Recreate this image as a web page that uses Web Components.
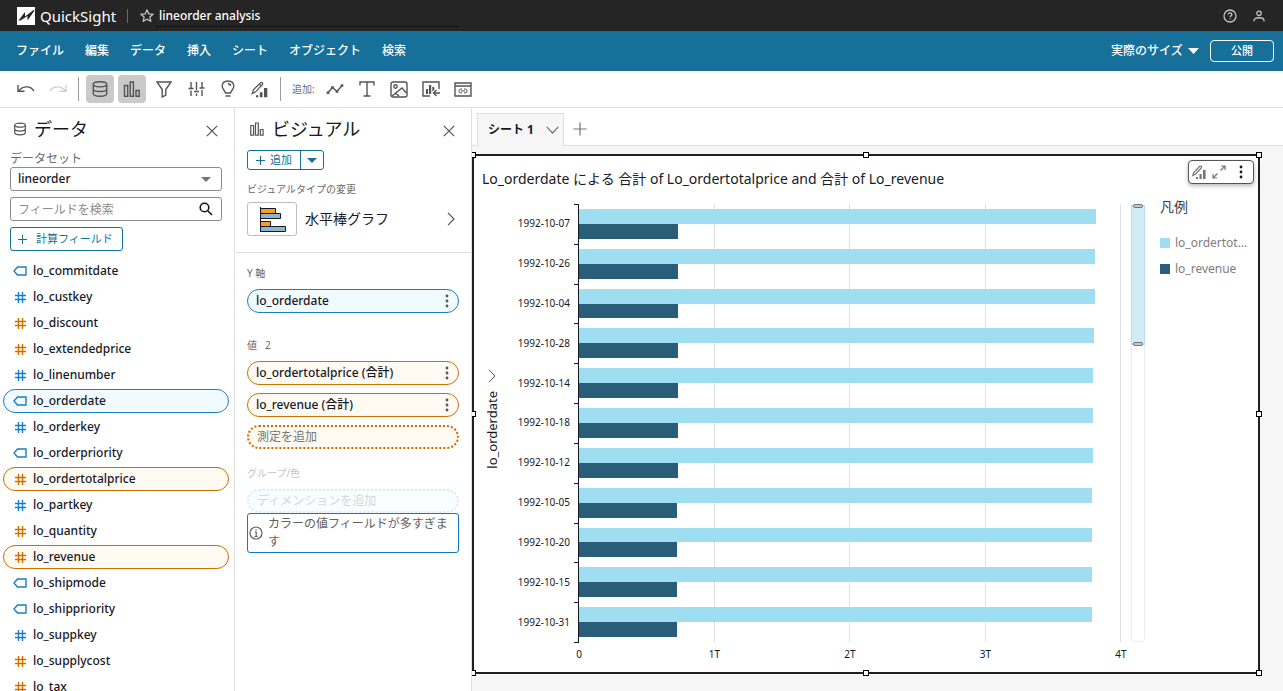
<!DOCTYPE html>
<html lang="ja">
<head>
<meta charset="utf-8">
<meta name="viewport" content="width=device-width, initial-scale=1">
<title>lineorder analysis - QuickSight</title>
<style>
  html, body { height: 100%; }
  body {
    margin: 0; display: flex; flex-direction: column; overflow: hidden;
    background: #fff; color: #16191f;
    font-family: "Noto Sans", "Noto Sans CJK JP", sans-serif;
    font-size: 12px; line-height: 16px;
    --blue: #16709a; --dim: #1a7fc1; --mea: #cc7000; --gray: #6b6b6b; --line: #e0e0e0;
  }
  main { flex: 1; display: flex; min-height: 0; }
</style>
</head>
<body>
<qs-header name="lineorder analysis"></qs-header>
<qs-menubar>
  <a href="#file">ファイル</a><a href="#edit">編集</a><a href="#data">データ</a><a href="#insert">挿入</a><a href="#sheet">シート</a><a href="#object">オブジェクト</a><a href="#search">検索</a>
</qs-menubar>
<qs-toolbar></qs-toolbar>
<main>
  <qs-data-panel>
    <qs-field kind="dim">lo_commitdate</qs-field>
    <qs-field kind="num">lo_custkey</qs-field>
    <qs-field kind="mea">lo_discount</qs-field>
    <qs-field kind="mea">lo_extendedprice</qs-field>
    <qs-field kind="num">lo_linenumber</qs-field>
    <qs-field kind="dim" selected>lo_orderdate</qs-field>
    <qs-field kind="num">lo_orderkey</qs-field>
    <qs-field kind="dim">lo_orderpriority</qs-field>
    <qs-field kind="mea" selected>lo_ordertotalprice</qs-field>
    <qs-field kind="num">lo_partkey</qs-field>
    <qs-field kind="mea">lo_quantity</qs-field>
    <qs-field kind="mea" selected>lo_revenue</qs-field>
    <qs-field kind="dim">lo_shipmode</qs-field>
    <qs-field kind="dim">lo_shippriority</qs-field>
    <qs-field kind="num">lo_suppkey</qs-field>
    <qs-field kind="mea">lo_supplycost</qs-field>
    <qs-field kind="mea">lo_tax</qs-field>
  </qs-data-panel>
  <qs-visual-panel>
    <qs-well label="Y 軸">
      <qs-pill kind="dim">lo_orderdate</qs-pill>
    </qs-well>
    <qs-well label="値" count="2">
      <qs-pill kind="mea">lo_ordertotalprice (合計)</qs-pill>
      <qs-pill kind="mea">lo_revenue (合計)</qs-pill>
      <qs-pill kind="mea" empty>測定を追加</qs-pill>
    </qs-well>
    <qs-well label="グループ/色" disabled>
      <qs-pill kind="dim" empty>ディメンションを追加</qs-pill>
      <qs-notice slot="note">カラーの値フィールドが多すぎます</qs-notice>
    </qs-well>
  </qs-visual-panel>
  <qs-sheet>
    <span slot="tab">シート 1</span>
    <qs-visual>
      <span slot="title">Lo_orderdate による 合計 of Lo_ordertotalprice and 合計 of Lo_revenue</span>
      <qs-bar-chart axis="lo_orderdate" max="4000">
        <qs-bar date="1992-10-07" total="3818" revenue="730"></qs-bar>
        <qs-bar date="1992-10-26" total="3811" revenue="730"></qs-bar>
        <qs-bar date="1992-10-04" total="3808" revenue="730"></qs-bar>
        <qs-bar date="1992-10-28" total="3804" revenue="729"></qs-bar>
        <qs-bar date="1992-10-14" total="3797" revenue="728"></qs-bar>
        <qs-bar date="1992-10-18" total="3796" revenue="727"></qs-bar>
        <qs-bar date="1992-10-12" total="3793" revenue="727"></qs-bar>
        <qs-bar date="1992-10-05" total="3789" revenue="726"></qs-bar>
        <qs-bar date="1992-10-20" total="3786" revenue="725"></qs-bar>
        <qs-bar date="1992-10-15" total="3784" revenue="724"></qs-bar>
        <qs-bar date="1992-10-31" total="3783" revenue="724"></qs-bar>
      </qs-bar-chart>
      <qs-legend slot="legend"></qs-legend>
    </qs-visual>
  </qs-sheet>
</main>

<script>
const BASE = `
  :host, *, *::before, *::after { box-sizing: border-box; }
  button, input, select { font: inherit; color: inherit; margin: 0; padding: 0; border: 0; background: none; appearance: none; outline: 0; }
  button { display: inline-flex; align-items: center; justify-content: center; }
  a { color: inherit; text-decoration: none; }
  h2, p { margin: 0; font-weight: 400; }
`;

function define(name, css, html) {
  customElements.define(name, class extends HTMLElement {
    constructor() {
      super();
      this.attachShadow({ mode: "open" });
    }
    connectedCallback() {
      const markup = typeof html === "function" ? html(this) : html;
      this.shadowRoot.innerHTML = `<style>${BASE}${css}</style>${markup}`;
    }
  });
}

/* name: [width, height, drawing] */
const ICONS = {
  logo: [18, 18, `<path fill="#fff" stroke="none" d="M0 0h18v18H0z"/><path fill="#252525" stroke="none" d="M1.500 13.500 8 5v4.500L17.200 2.500V4L10.500 13.500V9L3.500 13.500z"/>`],
  star: [14, 13, `<path d="M7 1l1.800 3.800 4.200.5-3.100 2.800.8 4.100L7 10.200l-3.700 2 .8-4.100L1 5.300l4.200-.5z"/>`],
  help: [14, 14, `<circle cx="7" cy="7" r="6"/><path d="M5.200 5.600c0-2.300 3.700-2.300 3.700 0 0 1.300-1.800 1.300-1.800 2.600M7.100 9.400v1.200"/>`],
  user: [12, 12, `<circle cx="6" cy="3.300" r="2.200"/><path d="M1 11.500V10.500C1 6.800 11 6.800 11 10.500V11.500"/>`],
  undo: [18, 12, `<path d="M1 2v6.300h6.500M1.500 8C6 2.500 13.500 2.500 17 8"/>`],
  redo: [18, 12, `<path d="M17 2v6.300h-6.500M16.500 8C12 2.500 4.500 2.500 1 8"/>`],
  db: [16, 18, `<ellipse cx="8" cy="4.300" rx="6.700" ry="2.600"/><path d="M1.300 4.300v9.200c0 3.600 13.400 3.600 13.400 0V4.300M1.300 9c0 3.400 13.400 3.400 13.400 0"/>`],
  dbSmall: [12, 14, `<ellipse cx="6" cy="3.200" rx="5.300" ry="2"/><path d="M.7 3.200v7.600c0 2.700 10.600 2.700 10.600 0V3.200M.7 7c0 2.700 10.600 2.700 10.600 0"/>`],
  bars: [18, 16, `<path d="M1.500 4.500h3.200v10.800H1.500zM7.200 1h3.200v14.300H7.200zM13 9.500h3.200v5.800H13z"/>`],
  barsSmall: [14, 14, `<path d="M.8 3.500h2.800v9.700H.8zM5.500 1h2.800v12.200H5.500zM10.300 7.500h2.800v5.700h-2.800z"/>`],
  filter: [16, 17, `<path d="M1 1h14L9.800 8.500V14L6.200 16V8.500z"/>`],
  params: [17, 16, `<path d="M3 1v4M3 9.500V15M8.500 1v8M8.500 12.500V15M14 1v3.500M14 9v6M.5 7.500h5M6 10.500h5M11.500 7h5M3 5v2.500M14 4.500V7"/>`],
  bulb: [14, 18, `<path d="M4.500 13c0-2-3.300-3.500-3.300-6.700C1.200 2.800 3.800 1 7 1s5.800 1.800 5.800 5.300c0 3.200-3.300 4.700-3.300 6.700zM4.500 16h5M7 3.700c1.800 0 2.600 1 2.600 2.400"/>`],
  insight: [18, 17, `<path fill="currentColor" stroke="none" d="M5 14.300h2.300v2H5zM8.800 11.300h2.700v5H8.800zM13 7h3.300v9.300H13z"/><path stroke-width="1.200" d="M1.200 12.500l1.200-3.700 7-7c1.200-1.200 3.200.3 2 1.700L4.600 10.800zM8.300 3l2 2"/>`],
  insightSmall: [15, 14, `<path fill="currentColor" stroke="none" d="M4 12h2v2H4zM7.500 9h2.200v5H7.500zM11 5h2.600v9H11z"/><path d="M.8 10.500l1-3L7.500 1.500c1-1.100 2.700.2 1.800 1.400L3.700 9z"/>`],
  line: [18, 12, `<path d="M2 9.500 6.500 4.500l4.500 4L16 2.500"/><path fill="currentColor" stroke="none" d="M.7 8.500h2.600v2.600H.7zM5.200 3.200h2.600v2.600H5.200zM9.700 7.200h2.600v2.600H9.700zM14.700 1.200h2.600v2.600h-2.600z"/>`],
  text: [16, 16, `<path d="M1 4.500V1h14v3.500M8 1v14M4.500 15h7"/>`],
  image: [18, 17, `<rect x="1" y="1" width="16" height="15" rx="2"/><circle cx="5.500" cy="5.500" r="1.700"/><path d="M2 15 12 7l4.500 5M5.500 12.200 9 15"/>`],
  chartIn: [18, 16, `<path d="M17 8V1H1v14h7M11.500 12H18M14.500 9l-3 3 3 3"/><path fill="currentColor" stroke="none" d="M4 8h2v5H4zM7 4h2.200v9H7zM10.300 6h2v3l-2 1.500z"/>`],
  embed: [18, 15, `<path d="M1 1h16v13H1zM1 4h16"/><path stroke-width="1" d="M8 7H6.800a1.900 1.900 0 0 0 0 3.800H8M10 7h1.200a1.900 1.900 0 0 1 0 3.800H10M7 8.900h4"/>`],
  close: [12, 12, `<path d="M.8.800 11.200 11.200M11.200.800.800 11.200"/>`],
  search: [14, 14, `<circle cx="5.500" cy="5.500" r="4.300"/><path d="M8.700 8.700 13 13"/>`],
  plus: [14, 14, `<path d="M7 .5v13M.5 7h13"/>`],
  plusSmall: [9, 9, `<path d="M4.500 0v9M0 4.500h9"/>`],
  caret: [10, 5, `<path fill="currentColor" stroke="none" d="M0 0h10L5 5z"/>`],
  caretBig: [11, 6, `<path fill="currentColor" stroke="none" d="M0 0h11L5.500 6z"/>`],
  down: [13, 8, `<path d="M.7.800 6.500 7 12.300.800"/>`],
  right: [8, 14, `<path d="M1 .8 7 7 1 13.200"/>`],
  dim: [14, 10, `<path d="M4.500 1H13v8H4.500L1 5z"/>`],
  hash: [11, 11, `<path d="M3.500 0v11M7.500 0v11M0 3.500h11M0 7.500h11"/>`],
  dots: [4, 14, `<g fill="currentColor" stroke="none"><circle cx="2" cy="2" r="1.400"/><circle cx="2" cy="7" r="1.400"/><circle cx="2" cy="12" r="1.400"/></g>`],
  expand: [14, 14, `<path d="M8.500 5.500 13 1M9 1h4v4M5.500 8.500 1 13M1 9v4h4"/>`],
  info: [14, 14, `<circle cx="7" cy="7" r="6"/><path d="M5.800 6h1.400v4.500M5.500 10.500h3.200M7 3.300v1.300"/>`],
  hbar: [30, 28, `<g stroke="#16191f"><path fill="#ff9d1f" d="M3.500 3.500h15v5h-15z"/><path fill="#8db6cc" d="M3.500 8.500h20v5h-20z"/><path fill="#ff9d1f" d="M3.500 16.500h10v5h-10z"/><path fill="#8db6cc" d="M3.500 21.500h25v5h-25z"/><path d="M3.500 2v25"/></g>`]
};

define("qs-icon", `
  :host { display: inline-flex; flex: none; }
  svg { display: block; fill: none; stroke: currentColor; stroke-width: var(--stroke, 1.4); }
`, el => {
  const [w, h, body] = ICONS[el.getAttribute("name")];
  return `<svg width="${w}" height="${h}" viewBox="0 0 ${w} ${h}" aria-hidden="true">${body}</svg>`;
});

define("qs-header", `
  :host { display: flex; align-items: center; height: 31px; flex: none; padding: 0 18px 0 17px; background: #252525; color: #fff; }
  .brand { font-size: 15px; line-height: 20px; margin-left: 5px; }
  .sep { width: 1px; height: 14px; margin: 0 12px 0 11px; background: #6b6b6b; }
  qs-icon { color: #c4c4c4; --stroke: 1.3; }
  input { width: 303px; height: 22px; margin-left: 2px; padding: 0 3px; font-weight: 500; border-bottom: 1px dotted #000; }
  .right { margin-left: auto; display: flex; align-items: center; gap: 16px; }
`, el => `
  <qs-icon name="logo"></qs-icon><span class="brand">QuickSight</span><span class="sep"></span>
  <qs-icon name="star"></qs-icon>
  <input aria-label="分析名" value="${el.getAttribute("name")}">
  <div class="right"><button aria-label="ヘルプ"><qs-icon name="help"></qs-icon></button><button aria-label="ユーザー"><qs-icon name="user"></qs-icon></button></div>
`);

define("qs-menubar", `
  :host { display: flex; align-items: center; height: 40px; flex: none; padding: 0 9px 0 16px; background: var(--blue); color: #fff; font-weight: 500; }
  nav { display: flex; gap: 21px; flex: 1; }
  ::slotted(a) { color: inherit; text-decoration: none; white-space: nowrap; }
  label { display: flex; align-items: center; gap: 4px; margin-right: 11px; }
  select { width: 73px; font-weight: 500; }
  .publish { width: 64px; height: 22px; border: 1px solid #fff; border-radius: 4px; font-weight: 500; font-size: 11px; }
`, `
  <nav><slot></slot></nav>
  <label><select aria-label="表示サイズ"><option>実際のサイズ</option></select><qs-icon name="caretBig"></qs-icon></label>
  <button class="publish">公開</button>
`);

define("qs-toolbar", `
  :host { display: flex; align-items: center; height: 37px; flex: none; padding: 0 12px; gap: 4px; border-bottom: 1px solid var(--line); color: #545454; }
  button { width: 28px; height: 28px; border-radius: 4px; }
  button[aria-pressed] { background: #cacaca; }
  button:disabled { color: #cfcfcf; }
  .sep { width: 1px; height: 24px; margin: 0 3px 0 2px; background: #9a9a9a; }
  .add { width: 29px; padding-left: 4px; font-size: 10px; white-space: nowrap; color: var(--gray); }
`, `
  <button aria-label="元に戻す"><qs-icon name="undo"></qs-icon></button>
  <button aria-label="やり直す" disabled><qs-icon name="redo"></qs-icon></button>
  <span class="sep"></span>
  <button aria-label="データ" aria-pressed="true"><qs-icon name="db"></qs-icon></button>
  <button aria-label="ビジュアル" aria-pressed="true"><qs-icon name="bars"></qs-icon></button>
  <button aria-label="フィルター"><qs-icon name="filter"></qs-icon></button>
  <button aria-label="パラメータ"><qs-icon name="params"></qs-icon></button>
  <button aria-label="インサイト"><qs-icon name="bulb"></qs-icon></button>
  <button aria-label="プロパティ"><qs-icon name="insight"></qs-icon></button>
  <span class="sep"></span>
  <span class="add">追加:</span>
  <button aria-label="ビジュアルを追加"><qs-icon name="line"></qs-icon></button>
  <button aria-label="テキストを追加"><qs-icon name="text"></qs-icon></button>
  <button aria-label="画像を追加"><qs-icon name="image"></qs-icon></button>
  <button aria-label="既存のビジュアルを追加"><qs-icon name="chartIn"></qs-icon></button>
  <button aria-label="埋め込みを追加"><qs-icon name="embed"></qs-icon></button>
`);

define("qs-panel-title", `
  :host { display: flex; align-items: center; height: 42px; color: #545454; --stroke: 1.2; }
  h2 { flex: 1; margin-left: 8px; font-size: 18px; line-height: 24px; color: #16191f; }
  button { margin-top: 4px; }
`, el => `<qs-icon name="${el.getAttribute("icon")}"></qs-icon><h2><slot></slot></h2><button aria-label="閉じる"><qs-icon name="close"></qs-icon></button>`);

define("qs-data-panel", `
  :host { display: flex; flex-direction: column; width: 235px; flex: none; border-right: 1px solid var(--line); overflow: hidden; }
  .controls { display: flex; flex-direction: column; align-items: flex-start; padding: 0 12px 7px 10px; gap: 6px; }
  qs-panel-title { padding: 0 4px; align-self: stretch; margin-bottom: -6px; }
  .caption { line-height: 17px; color: var(--gray); margin-bottom: -6px; }
  .box { display: flex; align-items: center; align-self: stretch; height: 24px; padding: 0 10px 0 7px; border: 1px solid #8c8c8c; border-radius: 3px; }
  .box select, .box input { flex: 1; min-width: 0; height: 22px; }
  .box select { font-weight: 500; }
  .box input::placeholder { color: #8c8c8c; opacity: 1; }
  .box qs-icon[name=caret] { color: #757575; }
  .box qs-icon[name=search] { color: #16191f; margin-right: -2px; --stroke: 1.6; }
  .calc { height: 24px; padding: 0 9px 0 7px; gap: 9px; border: 1px solid var(--blue); border-radius: 3px; color: var(--blue); font-size: 11px; --stroke: 1; }
`, `
  <div class="controls">
    <qs-panel-title icon="dbSmall">データ</qs-panel-title>
    <label class="caption" for="dataset">データセット</label>
    <div class="box"><select id="dataset"><option>lineorder</option></select><qs-icon name="caret"></qs-icon></div>
    <div class="box"><input type="search" aria-label="フィールドを検索" placeholder="フィールドを検索"><qs-icon name="search"></qs-icon></div>
    <button class="calc"><qs-icon name="plusSmall"></qs-icon>計算フィールド</button>
  </div>
  <slot></slot>
`);

define("qs-field", `
  :host { display: flex; align-items: center; height: 24px; flex: none; margin: 1px 5px 1px 3px; border: 1px solid transparent; border-radius: 12px; font-weight: 500; }
  :host([selected][kind=dim]) { border-color: var(--dim); background: #f1faff; }
  :host([selected][kind=mea]) { border-color: var(--mea); background: #fffbf3; }
  .mark { display: flex; justify-content: center; width: 14px; margin: 0 6px 0 9px; color: var(--dim); }
  :host([kind=mea]) .mark { color: var(--mea); }
`, el => `<span class="mark"><qs-icon name="${el.getAttribute("kind") === "dim" ? "dim" : "hash"}"></qs-icon></span><slot></slot>`);

define("qs-visual-panel", `
  :host { display: block; width: 237px; flex: none; border-right: 1px solid var(--line); overflow: hidden; }
  .head { padding: 0 12px 16px; border-bottom: 1px solid var(--line); }
  qs-panel-title { padding: 0 4px 0 3px; }
  .split { display: flex; width: 77px; height: 20px; border: 1px solid var(--blue); border-radius: 3px; color: var(--blue); font-size: 11px; --stroke: 1.2; }
  .split .new { flex: 1; gap: 5px; }
  .split .more { width: 23px; border-left: 1px solid var(--blue); }
  .caption { font-size: 10px; line-height: 16px; margin: 11px 0 5px; color: var(--gray); }
  .type { display: flex; width: 100%; justify-content: flex-start; font-size: 14px; line-height: 20px; padding-right: 4px; }
  .thumb { display: flex; align-items: center; justify-content: center; width: 50px; height: 34px; margin-right: 8px; border: 1px solid #bdbdbd; border-radius: 3px; --stroke: 1; }
  .type > qs-icon { margin-left: auto; color: #545454; --stroke: 1.2; }
  .wells { padding: 12px; }
`, `
  <div class="head">
    <qs-panel-title icon="barsSmall">ビジュアル</qs-panel-title>
    <div class="split"><button class="new"><qs-icon name="plusSmall"></qs-icon>追加</button><button class="more" aria-label="その他の追加"><qs-icon name="caret"></qs-icon></button></div>
    <p class="caption">ビジュアルタイプの変更</p>
    <button class="type"><span class="thumb"><qs-icon name="hbar"></qs-icon></span>水平棒グラフ<qs-icon name="right"></qs-icon></button>
  </div>
  <div class="wells"><slot></slot></div>
`);

define("qs-well", `
  :host { display: block; margin-bottom: 24px; }
  p { font-size: 10px; line-height: 16px; margin-bottom: 8px; color: var(--gray); }
  .count { margin-left: 8px; }
  .pills { display: flex; flex-direction: column; gap: 8px; }
  :host([disabled]) p { opacity: .4; }
  :host([disabled]) .pills { opacity: .3; --dim: #7cc3e8; }
  :host([disabled]) { margin-top: -8px; }
`, el => `
  <p>${el.getAttribute("label")}${el.hasAttribute("count") ? `<span class="count">${el.getAttribute("count")}</span>` : ""}</p>
  <div class="pills"><slot></slot></div><slot name="note"></slot>
`);

define("qs-pill", `
  :host { display: flex; align-items: center; height: 24px; padding: 0 9px 0 8px; border: 1px solid var(--dim); border-radius: 12px; background: #f1faff; font-weight: 500; }
  :host([kind=mea]) { border-color: var(--mea); background: #fffbf3; }
  :host([empty]) { border-width: 2px; border-style: dotted; font-weight: 400; color: #757575; }
  button { margin-left: auto; color: #545454; }
`, el => `<slot></slot>${el.hasAttribute("empty") ? "" : `<button aria-label="フィールドメニュー"><qs-icon name="dots"></qs-icon></button>`}`);

define("qs-notice", `
  :host { display: flex; align-items: center; gap: 5px; padding: 1px 9px 1px 1px; border: 1px solid #1177c9; border-radius: 3px; line-height: 18px; color: #606060; --stroke: 1.2; }
`, `<qs-icon name="info"></qs-icon><span><slot></slot></span>`);

define("qs-sheet", `
  :host { display: flex; flex-direction: column; flex: 1; min-width: 0; background: #f6f6f6; }
  .tabs { display: flex; align-items: flex-end; height: 38px; flex: none; padding-left: 5px; background: #fff; border-bottom: 1px solid var(--line); --stroke: 1.2; color: #757575; }
  .tab { height: 33px; margin-bottom: -1px; padding: 0 4px 0 10px; gap: 12px; background: #f6f6f6; border: 1px solid var(--line); border-bottom: 0; font-weight: 700; }
  .tab ::slotted(span) { color: #16191f; white-space: nowrap; }
  .new { height: 32px; margin-left: 9px; }
  .canvas { flex: 1; display: flex; min-height: 0; padding: 8px 23px 17px 0; overflow: hidden; }
`, `
  <div class="tabs"><button class="tab"><slot name="tab"></slot><qs-icon name="down"></qs-icon></button><button class="new" aria-label="シートを追加"><qs-icon name="plus"></qs-icon></button></div>
  <div class="canvas"><slot></slot></div>
`);

define("qs-visual", `
  :host { position: relative; display: grid; grid-template: auto 1fr / 1fr auto; flex: 1; min-width: 0; border: 2px solid #202020; background: #fff; padding: 13px 8px 6px 8px; }
  .title { grid-column: 1 / -1; font-size: 14px; line-height: 20px; margin-bottom: 15px; }
  .actions { position: absolute; top: 4px; right: 4px; display: flex; align-items: center; gap: 5px; width: 66px; height: 24px; padding: 0 4px 0 3px; border: 1px solid #545454; border-radius: 4px; background: #fff; box-shadow: 0 2px 4px #0004; color: #757575; --stroke: 1.2; }
  .actions button:last-child { margin-left: auto; margin-right: 6px; color: #16191f; }
  .handle { position: absolute; width: 6px; height: 6px; background: #fff; border: 1px solid #000; transform: translate(-50%, -50%); }
  .n { top: -1px; } .s { top: calc(100% + 1px); } .m { top: 50%; }
  .w { left: -1px; } .e { left: calc(100% + 1px); } .c { left: 50%; }
`, `
  <div class="title"><slot name="title"></slot></div>
  <slot></slot><slot name="legend"></slot>
  <div class="actions">
    <button aria-label="プロパティ"><qs-icon name="insightSmall"></qs-icon></button>
    <button aria-label="最大化"><qs-icon name="expand"></qs-icon></button>
    <button aria-label="メニュー"><qs-icon name="dots"></qs-icon></button>
  </div>
  ${["n w", "n c", "n e", "m w", "m e", "s w", "s c", "s e"].map(c => `<i class="handle ${c}"></i>`).join("")}
`);

define("qs-bar-chart", `
  :host { display: grid; grid-template: 1fr 24px / 1fr 14px; column-gap: 10px; min-width: 0; min-height: 0; }
  .plot { position: relative; display: flex; flex-direction: column; }
  .grid { position: absolute; inset: 0 0 0 96px; display: grid; grid-template-columns: repeat(4, 1fr); border-left: 1px solid #16191f; }
  .grid i { border-right: 1px solid #e0e0e0; }
  .axis { position: absolute; left: 2px; top: 0; bottom: 0; display: flex; flex-direction: column; align-items: center; justify-content: center; gap: 8px; width: 16px; padding-bottom: 8px; font-size: 13px; --stroke: 1; }
  .axis span { writing-mode: vertical-rl; transform: rotate(180deg); }
  .axis button { color: #545454; }
  .scale { grid-row: 2; display: flex; justify-content: space-between; margin-left: 97px; font-size: 10px; }
  .scale span { width: 0; display: flex; justify-content: center; line-height: 24px; }
  .zoom { border: 1px solid #ededed; border-radius: 3px; }
  .range { height: 32%; background: #d3ebf5; border: 1px solid #b9dceb; margin: 0 -1px; display: flex; flex-direction: column; justify-content: space-between; align-items: center; }
  .range i { width: 10px; height: 4px; margin: -2px 0; border: 1px solid #6b7780; border-radius: 2px; background: #c4ccd0; }
`, el => `
  <div class="plot">
    <div class="grid"><i></i><i></i><i></i><i></i></div>
    <slot></slot>
    <div class="axis"><button aria-label="軸メニュー"><qs-icon name="right"></qs-icon></button><span>${el.getAttribute("axis")}</span></div>
  </div>
  <div class="zoom"><div class="range"><i></i><i></i></div></div>
  <div class="scale"><span>0</span><span>1T</span><span>2T</span><span>3T</span><span>4T</span></div>
`);

define("qs-bar", `
  :host { position: relative; display: flex; flex: 1; min-height: 0; align-items: stretch; }
  .date { width: 88px; flex: none; display: flex; align-items: center; justify-content: flex-end; padding-bottom: 1px; font-size: 10px; line-height: 16px; }
  .tick { width: 5px; margin: 0 0 -1px 4px; border: solid #16191f; border-width: 1px 0; flex: none; }
  .bars { flex: 1; display: flex; flex-direction: column; padding: 5px 0; }
  .bars i { flex: 1; }
  .total { background: #9fddf0; }
  .revenue { background: #2a5d78; }
`, el => {
  const max = el.parentElement.getAttribute("max");
  const share = key => (el.getAttribute(key) / max * 100).toFixed(2);
  return `<span class="date">${el.getAttribute("date")}</span><i class="tick"></i>
    <div class="bars"><i class="total" style="width:${share("total")}%"></i><i class="revenue" style="width:${share("revenue")}%"></i></div>`;
});

define("qs-legend", `
  :host { display: block; width: 105px; padding: 0 0 0 15px; color: #7d7d7d; line-height: 16px; }
  p { font-size: 14px; line-height: 20px; margin: -7px 0 18px; color: #3c3c3c; }
  div { display: flex; align-items: center; gap: 5px; height: 16px; margin-bottom: 10px; }
  i { width: 10px; height: 10px; flex: none; background: #9fddf0; }
  .revenue i { background: #2a5d78; }
`, `<p>凡例</p><div><i></i>lo_ordertot…</div><div class="revenue"><i></i>lo_revenue</div>`);
</script>
</body>
</html>
